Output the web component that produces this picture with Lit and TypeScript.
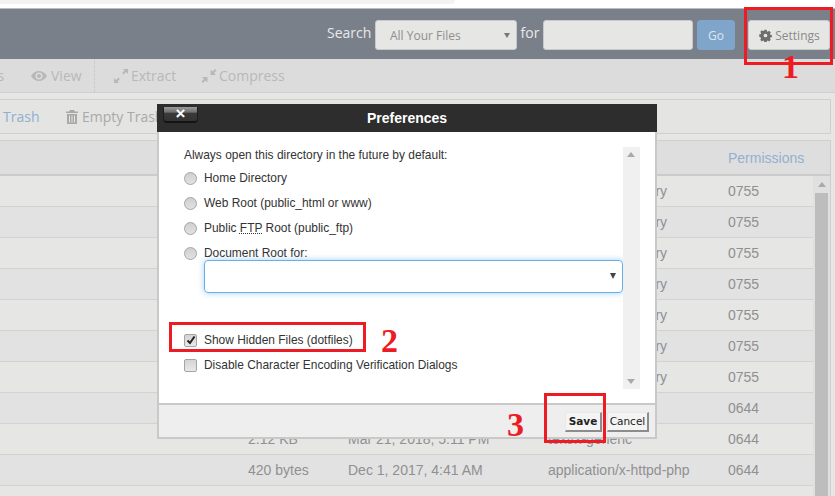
import { LitElement, html, css, svg } from "lit";
import { customElement } from "lit/decorators.js";

const rows = [
  ["", "", "httpd/unix-directory", "0755"],
  ["", "", "httpd/unix-directory", "0755"],
  ["", "", "httpd/unix-directory", "0755"],
  ["", "", "httpd/unix-directory", "0755"],
  ["", "", "httpd/unix-directory", "0755"],
  ["", "", "httpd/unix-directory", "0755"],
  ["", "", "httpd/unix-directory", "0755"],
  ["", "", "", "0644"],
  ["2.12 KB", "Mar 21, 2018, 5:11 PM", "text/x-generic", "0644"],
  ["420 bytes", "Dec 1, 2017, 4:41 AM", "application/x-httpd-php", "0644"],
  ["", "", "", ""],
];

const gear = svg`<path fill="currentColor" fill-rule="evenodd" d="M5.6 0h2.8l.4 1.9 1 .4L11.5 1.300l2 2-1 1.700.4 1 1.900.4v2.800l-1.900.4-.4 1 1 1.700-2 2-1.700-1-1 .4-.4 1.900H5.600l-.4-1.900-1-.4-1.700 1-2-2 1-1.700-.4-1L-.7 8.400V5.600l1.900-.4.4-1-1-1.700 2-2 1.700 1 1-.4zM7 4.700a2.300 2.300 0 1 0 0 4.600 2.300 2.300 0 0 0 0-4.600z"/>`;

@customElement("app-root")
export class AppRoot extends LitElement {
  static styles = css`
    :host {
      display: block;
      position: relative;
      width: 835px;
      height: 496px;
      overflow: hidden;
      background: #e6e6e4;
      font-family: "Open Sans", sans-serif;
    }
    .strip { height: 8px; background: #fff; }
    .strip-tab { height: 4px; width: 455px; background: #f2f3f2; border-bottom-right-radius: 6px; }
    .search {
      height: 51px;
      box-sizing: border-box;
      border-top: 1px solid #b9bbbe;
      background: #7a808a;
      display: flex;
      align-items: center;
      padding: 1px 0 0 327px;
      color: #e9e9e9;
      font-size: 14px;
    }
    .search .lbl { width: 48px; margin-top: -5px; }
    .ctl {
      height: 30px;
      box-sizing: border-box;
      background: #e6e6e5;
      border: 1px solid #c9c9c9;
      border-radius: 3px;
      display: flex;
      align-items: center;
      padding-top: 1px;
      color: #8e8e8e;
      font-size: 12px;
    }
    .sel { width: 142px; padding-left: 14px; position: relative; }
    .sel::after {
      content: "";
      position: absolute;
      right: 6px;
      top: 12px;
      border: 3px solid transparent;
      border-top: 5px solid #777;
      border-bottom: 0;
    }
    .for { width: 26px; text-align: center; margin-top: -5px; }
    .input { width: 150px; }
    .go {
      width: 38px;
      margin-left: 4px;
      justify-content: center;
      background: #7fa5cb;
      border-color: #7fa5cb;
      color: #dfe6ee;
    }
    .settings {
      width: 82px;
      margin-left: 13px;
      justify-content: center;
      gap: 3px;
      padding-left: 1px;
      color: #8a8a8a;
    }
    .settings svg { width: 13px; height: 13px; color: #6e6e6e; }
    .toolbar {
      height: 34px;
      box-sizing: border-box;
      background: #dcdcdc;
      border-bottom: 1px solid #cfcfcf;
      display: flex;
      align-items: center;
      color: #b8b8b8;
      font-size: 14px;
    }
    .tool { display: flex; align-items: center; gap: 2px; white-space: nowrap; }
    .tool svg { width: 16px; height: 16px; display: block; flex: none; }
    .cut { margin-left: -75px; width: 106px; }
    .view { width: 63px; gap: 4px; }
    .sep { height: 33px; border-left: 1px dotted #c3c3c3; width: 18px; }
    .extract { width: 88px; }
    .actions {
      height: 35px;
      box-sizing: border-box;
      margin: 6px 4px 6px 0;
      border: 1px solid #cfcfce;
      border-left: 0;
      background: #e4e4e3;
      display: flex;
      align-items: center;
      padding-left: 3px;
      font-size: 14px;
      color: #a9a9a9;
    }
    .trash { color: #8fb0d0; width: 63px; }
    .empty { gap: 4px; }
    .empty svg { width: 12px; height: 14px; }
    .tablewrap {
      margin-right: 4px;
      border: 1px solid #cfcfce;
      border-left: 0;
      font-family: "Liberation Sans", sans-serif;
      font-size: 14px;
      color: #909090;
    }
    .head {
      height: 35px;
      box-sizing: border-box;
      background: #dedede;
      color: #93b0d0;
      border-bottom: 2px solid #cbcbcb;
      display: flex;
      align-items: center;
      padding-left: 728px;
    }
    .tbody { display: flex; }
    .rows { width: 813px; flex: none; }
    .row {
      height: 31px;
      box-sizing: border-box;
      border-bottom: 1px solid #d2d2d1;
      background: #e6e6e4;
      display: grid;
      grid-template-columns: 100px 200px 180px 1fr;
      align-items: center;
      padding-left: 248px;
      white-space: nowrap;
    }
    .row:nth-child(even) { background: #e2e2e2; }
    .scroll {
      flex: 1;
      background: #e0e0e0;
      display: flex;
      flex-direction: column;
      align-items: stretch;
    }
    .arrow {
      height: 17px;
      flex: none;
      display: flex;
      align-items: center;
      justify-content: center;
    }
    .arrow::before {
      content: "";
      border: 4px solid transparent;
      border-bottom: 5px solid #a9a9a9;
      border-top: 0;
    }
    .thumb {
      flex: 1;
      background: #bdbdbd;
      margin: 0 2px 0 2px;
    }

    .modal {
      position: absolute;
      left: 157px;
      top: 104px;
      width: 500px;
      height: 335px;
      display: flex;
      flex-direction: column;
      font-family: "Liberation Sans", sans-serif;
      font-size: 11.950px;
      color: #333;
    }
    .title {
      height: 28px;
      flex: none;
      background-color: #2d2d2d;
      background-image: radial-gradient(#3a3a3a 0.6px, transparent 0.7px);
      background-size: 4px 4px;
      color: #fff;
      font-size: 14px;
      font-weight: 700;
      display: flex;
      align-items: center;
      justify-content: center;
      position: relative;
    }
    .close {
      position: absolute;
      left: 6px;
      top: 3px;
      width: 35px;
      height: 16px;
      box-sizing: border-box;
      background: linear-gradient(#9a9a9a 0, #6e6e6e 38%, #3a3a3a 42%, #333 100%);
      border-bottom: 2px solid #141414;
      border-left: 1px solid #1c1c1c;
      border-right: 1px solid #1c1c1c;
      border-radius: 1px 1px 4px 4px;
      display: flex;
      align-items: center;
      justify-content: center;
      font-size: 17px;
      line-height: 14px;
      font-weight: 700;
    }
    .body {
      flex: 1;
      background: #fff;
      border-left: 2px solid #c9c9c9;
      border-right: 2px solid #c9c9c9;
      border-bottom: 2px solid #c9c9c9;
      display: flex;
      padding: 15px 15px 15px 25px;
      min-height: 0;
    }
    .form { flex: 1; display: flex; flex-direction: column; min-width: 0; padding-top: 1px; }
    .intro { height: 14px; line-height: 14px; margin-bottom: 6px; }
    .opt { height: 25px; display: flex; align-items: center; gap: 7px; padding-bottom: 5px; box-sizing: border-box; }
    .radio {
      width: 13px;
      height: 13px;
      box-sizing: border-box;
      border-radius: 50%;
      border: 1px solid #a4a4a4;
      background: linear-gradient(#cfcfcf, #e2e2e2);
      flex: none;
    }
    .box {
      width: 13px;
      height: 13px;
      box-sizing: border-box;
      border: 1px solid #a4a4a4;
      border-radius: 2px;
      background: linear-gradient(#d4d4d4, #e8e8e8);
      flex: none;
      display: flex;
      align-items: center;
      justify-content: center;
    }
    .box svg { width: 10px; height: 10px; }
    abbr { text-decoration: underline dotted; text-underline-offset: 1px; }
    .dd {
      height: 33px;
      box-sizing: border-box;
      margin-left: 20px;
      margin-top: -8px;
      margin-bottom: 37px;
      border: 1px solid #66afe9;
      border-radius: 4px;
      box-shadow: 0 0 6px rgba(102, 175, 233, 0.6);
      position: relative;
    }
    .dd::after {
      content: "";
      position: absolute;
      right: 6px;
      top: 12px;
      border: 3.500px solid transparent;
      border-top: 6px solid #444;
      border-bottom: 0;
    }
    .sb {
      width: 17px;
      flex: none;
      background: #f0f0f0;
      height: 242px;
      position: relative;
    }
    .sb::before, .sb::after {
      content: "";
      position: absolute;
      left: 4px;
      border: 4px solid transparent;
    }
    .sb::before { top: 5px; border-bottom: 5px solid #aaa; border-top: 0; }
    .sb::after { bottom: 5px; border-top: 5px solid #aaa; border-bottom: 0; }
    .foot {
      height: 34px;
      flex: none;
      box-sizing: border-box;
      background-color: #eeeeee;
      background-image: radial-gradient(#e3e3e3 0.6px, transparent 0.7px);
      background-size: 4px 4px;
      border: 2px solid #c9c9c9;
      border-top: 0;
      display: flex;
      align-items: center;
      justify-content: flex-end;
      gap: 5px;
      padding: 1px 6px 0 0;
    }
    .btn {
      height: 20px;
      box-sizing: border-box;
      background: #f4f4f4;
      border: 1px solid #e8e8e8;
      border-right: 2px solid #8c8c8c;
      border-bottom: 2px solid #8c8c8c;
      font-family: "DejaVu Sans", sans-serif;
      font-size: 10.500px;
      color: #222;
      display: flex;
      align-items: center;
      justify-content: center;
    }
    .save { width: 37px; font-weight: 700; }
    .cancel { width: 42px; }
    .mark { position: absolute; border: 3px solid #ed1c24; box-sizing: border-box; }
    .num {
      position: absolute;
      font-family: "Liberation Serif", serif;
      font-weight: 700;
      font-size: 34px;
      line-height: 34px;
      color: #ed1c24;
    }
  `;

  render() {
    return html`
      <div class="strip"><div class="strip-tab"></div></div>
      <div class="search">
        <span class="lbl">Search</span>
        <div class="ctl sel">All Your Files</div>
        <span class="for">for</span>
        <div class="ctl input"></div>
        <div class="ctl go">Go</div>
        <div class="ctl settings"><svg viewBox="-1 -1 16 16">${gear}</svg>Settings</div>
      </div>
      <div class="toolbar">
        <div class="tool cut">Permissions</div>
        <div class="tool view">
          <svg viewBox="0 0 16 16"><path fill="currentColor" fill-rule="evenodd" d="M0 8c2-3.500 5-5 8-5s6 1.500 8 5c-2 3.500-5 5-8 5s-6-1.500-8-5zm8-3.500a3.500 3.500 0 1 0 0 7 3.500 3.500 0 0 0 0-7zM8 6a2 2 0 1 1 0 4 2 2 0 0 1 0-4z"/></svg>
          View
        </div>
        <div class="sep"></div>
        <div class="tool extract">
          <svg viewBox="0 0 16 16"><path fill="currentColor" d="M10 1h5v5l-2-2-2.500 2.500-1.500-1.500L11.500 2.500zM6 15H1v-5l2 2 2.500-2.500 1.500 1.500L4.500 13.500z"/></svg>
          Extract
        </div>
        <div class="tool">
          <svg viewBox="0 0 16 16"><path fill="currentColor" d="M14 1l1.500 1.500L13 5l2 2H9.500V1.500l2 2zM2 15L.5 13.500 3 11 1 9h5.500v5.500l-2-2z"/></svg>
          Compress
        </div>
      </div>
      <div class="actions">
        <div class="tool trash">Trash</div>
        <div class="tool empty">
          <svg viewBox="0 0 12 14"><path fill="currentColor" fill-rule="evenodd" d="M4 0h4l.8 1.500H12V3H0V1.500h3.200zM1 4h10v10H1zM3 5.500v7h1v-7zm2.500 0v7h1v-7zm2.500 0v7h1v-7z"/></svg>
          Empty Trash
        </div>
      </div>
      <div class="tablewrap">
        <div class="head"><span>Permissions</span></div>
        <div class="tbody">
          <div class="rows">
            ${rows.map(
              (r) => html`<div class="row">
                <span>${r[0]}</span><span>${r[1]}</span><span>${r[2]}</span><span>${r[3]}</span>
              </div>`
            )}
          </div>
          <div class="scroll"><div class="arrow"></div><div class="thumb"></div></div>
        </div>
      </div>

      <div class="modal">
        <div class="title">
          <div class="close">×</div>
          Preferences
        </div>
        <div class="body">
          <div class="form">
            <div class="intro">Always open this directory in the future by default:</div>
            <div class="opt"><span class="radio"></span>Home Directory</div>
            <div class="opt"><span class="radio"></span>Web Root (public_html or www)</div>
            <div class="opt"><span class="radio"></span><span>Public <abbr>FTP</abbr> Root (public_ftp)</span></div>
            <div class="opt"><span class="radio"></span>Document Root for:</div>
            <div class="dd"></div>
            <div class="opt">
              <span class="box"><svg viewBox="0 0 10 10"><path fill="none" stroke="#222" stroke-width="2" d="M1.500 5.500l2.500 2.500 4.500-6.500"/></svg></span>
              Show Hidden Files (dotfiles)
            </div>
            <div class="opt"><span class="box"></span>Disable Character Encoding Verification Dialogs</div>
          </div>
          <div class="sb"></div>
        </div>
        <div class="foot">
          <div class="btn save">Save</div>
          <div class="btn cancel">Cancel</div>
        </div>
      </div>

      <div class="mark" style="left:744px;top:7px;width:89px;height:58px"></div>
      <div class="num" style="left:782px;top:50px">1</div>
      <div class="mark" style="left:169px;top:322px;width:197px;height:30px"></div>
      <div class="num" style="left:381px;top:324px">2</div>
      <div class="mark" style="left:544px;top:393px;width:62px;height:50px"></div>
      <div class="num" style="left:507px;top:408px">3</div>
    `;
  }
}
